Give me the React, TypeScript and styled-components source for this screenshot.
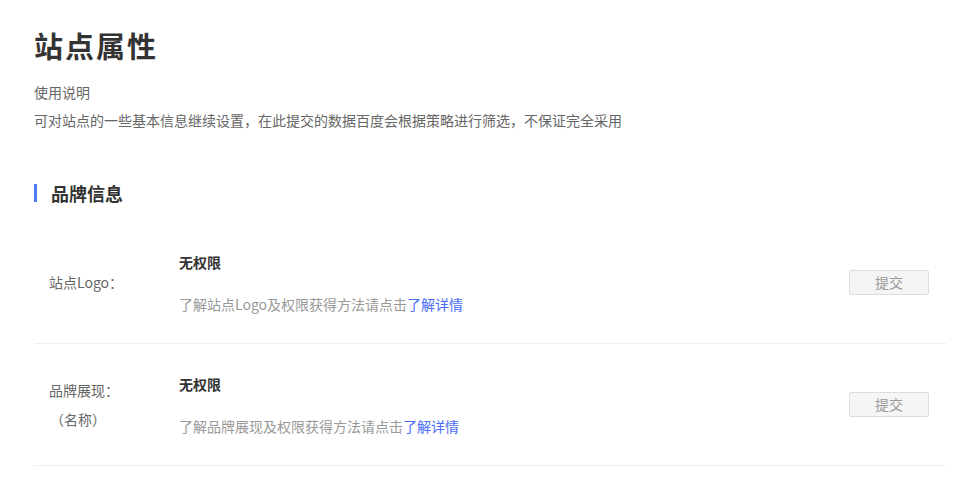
import React from "react";
import styled, { createGlobalStyle } from "styled-components";

const GlobalStyle = createGlobalStyle`
  body {
    margin: 0;
    background: #fff;
    font-family: "Noto Sans CJK SC", "Noto Sans", "Liberation Sans", sans-serif;
  }
`;

const rows = [
  { label: ["站点Logo："], name: "站点Logo" },
  { label: ["品牌展现：", "（名称）"], name: "品牌展现" },
];

function App() {
  return (
    <StyledPage>
      <GlobalStyle />
      <h1 className="title">站点属性</h1>
      <div className="desc">
        <p>使用说明</p>
        <p>可对站点的一些基本信息继续设置，在此提交的数据百度会根据策略进行筛选，不保证完全采用</p>
      </div>

      <SectionTitle>品牌信息</SectionTitle>

      {rows.map((row) => (
        <Row key={row.name}>
          <Label>
            {row.label.map((l) => (
              <span key={l}>{l}</span>
            ))}
          </Label>
          <Content>
            <strong>无权限</strong>
            <p>
              了解{row.name}及权限获得方法请点击<a href="#">了解详情</a>
            </p>
          </Content>
          <SubmitButton disabled>提交</SubmitButton>
        </Row>
      ))}
    </StyledPage>
  );
}

const StyledPage = styled.div`
  padding: 25px 31px 0 34px;

  .title {
    margin: 0;
    font-size: 29px;
    line-height: 40px;
    font-weight: 700;
    letter-spacing: 2px;
    color: #333;
  }

  .desc {
    margin-top: 13px;

    p {
      margin: 0;
      font-size: 14px;
      line-height: 28px;
      color: #666;
    }
  }
`;

const SectionTitle = styled.h2`
  position: relative;
  margin: 47px 0 17px;
  padding-left: 17px;
  font-size: 18px;
  line-height: 24px;
  font-weight: 700;
  color: #333;

  &::before {
    content: "";
    position: absolute;
    left: 0;
    top: 3px;
    width: 3px;
    height: 18px;
    background: #4e7cf6;
  }
`;

const Row = styled.div`
  display: flex;
  align-items: center;
  height: 121px;
  border-bottom: 1px solid #eee;
`;

const Label = styled.div`
  width: 130px;
  padding-left: 15px;
  display: flex;
  flex-direction: column;
  font-size: 14px;
  line-height: 29px;
  color: #666;

  span:nth-child(2) {
    padding-left: 1px;
  }
`;

const Content = styled.div`
  flex: 1;
  display: flex;
  flex-direction: column;
  gap: 22px;
  font-size: 14px;
  line-height: 20px;

  strong {
    color: #333;
    font-weight: 700;
  }

  p {
    margin: 0;
    color: #999;
  }

  a {
    color: #4a6cf7;
    text-decoration: none;
  }
`;

const SubmitButton = styled.button`
  width: 80px;
  height: 25px;
  margin-right: 17px;
  padding: 0;
  border: 1px solid #ddd;
  border-radius: 2px;
  background: #f5f5f5;
  color: #999;
  font-family: inherit;
  font-size: 14px;
  line-height: 23px;
`;

export default App;
